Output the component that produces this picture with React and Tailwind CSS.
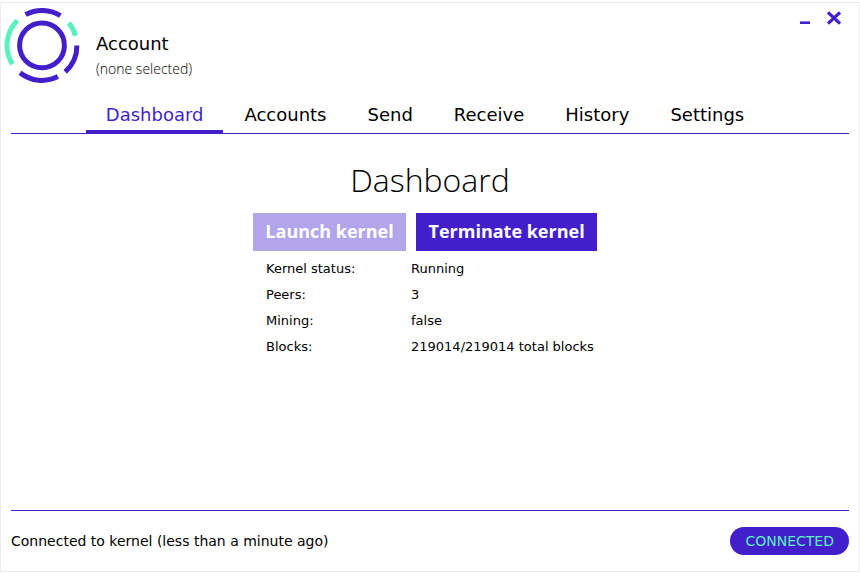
const tabs = ['Dashboard', 'Accounts', 'Send', 'Receive', 'History', 'Settings'];

const stats = [
  ['Kernel status:', 'Running'],
  ['Peers:', '3'],
  ['Mining:', 'false'],
  ['Blocks:', '219014/219014 total blocks'],
];

function Logo() {
  return (
    <svg className="size-[76px] shrink-0" viewBox="-38 -38.4 76 76" fill="none" strokeWidth="5" aria-hidden="true">
      <circle r="22.4" stroke="#421fcb" />
      <g stroke="#421fcb">
        <path d="M-16.4 -30.9A35 35 0 0 1 18.4 -29.8" />
        <path d="M34.9 0A35 35 0 0 1 23.2 26.4" />
        <path d="M15.9 31.2A35 35 0 0 1 -21.9 27.3" />
      </g>
      <g stroke="#5af0c0">
        <path d="M26.7 -22.6A35 35 0 0 1 33.6 -9.6" />
        <path d="M-29.5 18.8A35 35 0 0 1 -24.6 -24.9" />
      </g>
    </svg>
  );
}

export default function App() {
  return (
    <div className="min-h-screen flex flex-col bg-white pt-[2px] pb-[2px] text-[13px] leading-[26px] text-black font-['DejaVu_Sans',sans-serif]">
      <div className="flex grow flex-col border border-[#ebebeb]">
        <header className="flex items-start pt-1 pl-[3px] pr-[17px]">
          <Logo />
          <div className="grow pl-4 pt-6">
            <div className="text-[18px]">Account</div>
            <div className="font-['Open_Sans',sans-serif] text-[14px] leading-6 font-light">(none selected)</div>
          </div>
          <div className="flex gap-[15px] pt-1">
            <button type="button" aria-label="Minimize" className="block">
              <svg className="h-4 w-3" viewBox="0 0 12 16" aria-hidden="true">
                <path d="M1 11.7H11" stroke="#421fcb" strokeWidth="2.6" />
              </svg>
            </button>
            <button type="button" aria-label="Close" className="block">
              <svg className="size-4" viewBox="0 0 16 16" aria-hidden="true">
                <path d="M2 1.3L14 12.7M14 1.3L2 12.7" stroke="#421fcb" strokeWidth="3.2" />
              </svg>
            </button>
          </div>
        </header>

        <nav className="mx-[10px] mt-[19px] flex justify-center gap-px border-b border-[#421fcb] pr-[10px] text-[18px]">
          {tabs.map((tab, i) => (
            <a
              key={tab}
              href={'#' + tab.toLowerCase()}
              className={
                i === 0
                  ? 'border-b-3 border-[#421fcb] px-5 pb-[2px] text-[#421fcb]'
                  : 'border-b-3 border-transparent px-5 pb-[2px]'
              }
            >
              {tab}
            </a>
          ))}
        </nav>

        <main className="flex grow flex-col items-center pt-6 pr-[10px]">
          <h1 className="pl-[10px] font-['Open_Sans',sans-serif] text-[32px] leading-[44px] font-light">Dashboard</h1>
          <div className="mt-[11px] w-[344px]">
            <div className="flex gap-[10px] font-['Open_Sans',sans-serif] text-[18px] font-bold text-white">
              <button type="button" disabled className="h-[38px] grow bg-[#b3a5ea] px-3 pb-[2px]">Launch kernel</button>
              <button type="button" className="h-[38px] grow bg-[#421fcb] px-3 pb-[2px]">Terminate kernel</button>
            </div>
            <table className="mt-[5px] ml-[13px]">
              <tbody>
                {stats.map(([label, value]) => (
                  <tr key={label}>
                    <th scope="row" className="w-[145px] text-left font-normal">{label}</th>
                    <td>{value}</td>
                  </tr>
                ))}
              </tbody>
            </table>
          </div>
        </main>

        <footer className="mx-[10px] flex items-center justify-between border-t border-[#421fcb] py-4">
          <span className="text-[14px]">Connected to kernel (less than a minute ago)</span>
          <span className="rounded-full bg-[#421fcb] px-[15px] text-[14px] leading-[28px] text-[#5af0c0]">CONNECTED</span>
        </footer>
      </div>
    </div>
  );
}
